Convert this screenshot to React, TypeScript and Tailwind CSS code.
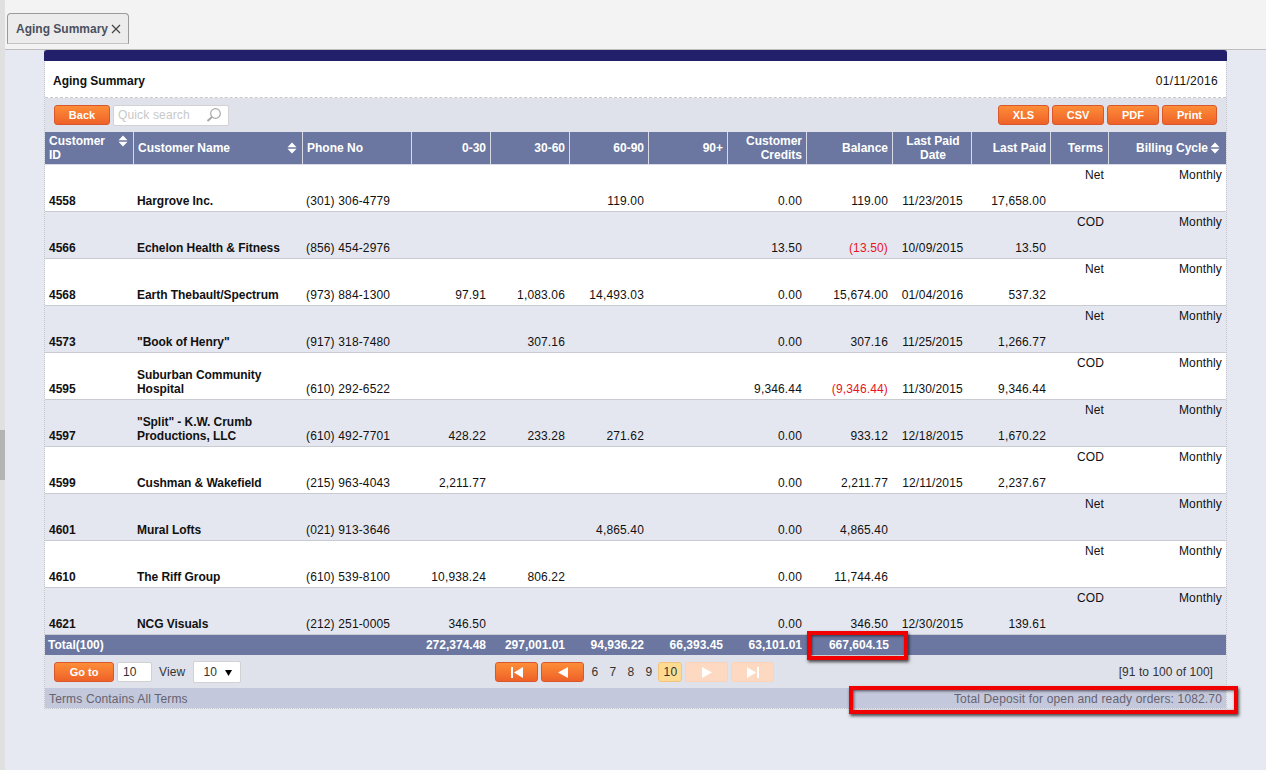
import React from "react";

type Row = {
  id: string;
  name: React.ReactNode;
  phone: string;
  a?: string;
  b?: string;
  c?: string;
  d?: string;
  credits: string;
  balance: string;
  negative?: boolean;
  date?: string;
  paid?: string;
  terms: string;
};

const rows: Row[] = [
  { id: "4558", name: "Hargrove Inc.", phone: "(301) 306-4779", c: "119.00", credits: "0.00", balance: "119.00", date: "11/23/2015", paid: "17,658.00", terms: "Net" },
  { id: "4566", name: "Echelon Health & Fitness", phone: "(856) 454-2976", credits: "13.50", balance: "(13.50)", negative: true, date: "10/09/2015", paid: "13.50", terms: "COD" },
  { id: "4568", name: "Earth Thebault/Spectrum", phone: "(973) 884-1300", a: "97.91", b: "1,083.06", c: "14,493.03", credits: "0.00", balance: "15,674.00", date: "01/04/2016", paid: "537.32", terms: "Net" },
  { id: "4573", name: "\"Book of Henry\"", phone: "(917) 318-7480", b: "307.16", credits: "0.00", balance: "307.16", date: "11/25/2015", paid: "1,266.77", terms: "Net" },
  { id: "4595", name: <>Suburban Community<br />Hospital</>, phone: "(610) 292-6522", credits: "9,346.44", balance: "(9,346.44)", negative: true, date: "11/30/2015", paid: "9,346.44", terms: "COD" },
  { id: "4597", name: <>"Split" - K.W. Crumb<br />Productions, LLC</>, phone: "(610) 492-7701", a: "428.22", b: "233.28", c: "271.62", credits: "0.00", balance: "933.12", date: "12/18/2015", paid: "1,670.22", terms: "Net" },
  { id: "4599", name: "Cushman & Wakefield", phone: "(215) 963-4043", a: "2,211.77", credits: "0.00", balance: "2,211.77", date: "12/11/2015", paid: "2,237.67", terms: "COD" },
  { id: "4601", name: "Mural Lofts", phone: "(021) 913-3646", c: "4,865.40", credits: "0.00", balance: "4,865.40", terms: "Net" },
  { id: "4610", name: "The Riff Group", phone: "(610) 539-8100", a: "10,938.24", b: "806.22", credits: "0.00", balance: "11,744.46", terms: "Net" },
  { id: "4621", name: "NCG Visuals", phone: "(212) 251-0005", a: "346.50", credits: "0.00", balance: "346.50", date: "12/30/2015", paid: "139.61", terms: "COD" },
];

const orangeBtn =
  "h-5 rounded-[3px] border border-[#d9572c] bg-gradient-to-b from-[#fd8d38] to-[#ee6128] text-[11px] font-bold tracking-normal text-white flex items-center justify-center";
const fadedBtn =
  "h-5 w-[43px] rounded-[3px] border border-[#fbd3b8] bg-[#fdd9c2] flex items-center justify-center";
const th = "border-r border-b border-r-[#d8dbe6] border-b-[#d8dbe6] px-1 leading-[14px] font-bold tracking-normal";
const td = "border-b border-[#c9cbd2] pb-[3px] align-bottom leading-[14px]";
const topTd = "border-b border-[#c9cbd2] pt-[3px] text-right align-top leading-[14px]";

function Sort() {
  return (
    <svg width="10" height="12" viewBox="0 0 10 12" className="shrink-0 fill-white">
      <path d="M5 0.5 9.5 5.2H0.5Z" />
      <path d="M5 11.5 9.5 6.8H0.5Z" />
    </svg>
  );
}

function Money({ v }: { v?: string }) {
  return <td className={td + " pr-[5px] text-right"}>{v}</td>;
}

export default function App() {
  return (
    <div className="relative flex min-h-[770px] w-[1266px] overflow-hidden bg-[#e6e9f2] font-['Liberation_Sans',Arial,sans-serif] text-xs tracking-[0.15px] text-[#111]">
      {/* scrollbar strip */}
      <div className="flex w-[5px] shrink-0 flex-col bg-[#e0e0e0]">
        <div className="mt-[430px] h-[50px] bg-[#b4b4b4]" />
      </div>

      <div className="flex min-w-0 flex-1 flex-col">
        {/* tab strip */}
        <div className="flex h-[50px] shrink-0 items-end border-b border-[#bdbdbd] bg-[#f3f3f3] pb-[5px] pl-[2px]">
          <div className="flex h-[31px] w-[122px] items-center gap-[3px] rounded-t-[4px] border border-[#9a9a9a] border-b-[#c4c4c4] bg-[#ececec] pl-2 font-bold tracking-normal text-[#4a5160]">
            Aging Summary
            <svg width="10" height="10" viewBox="0 0 10 10" className="stroke-[#444]">
              <path d="M1 1 9 9M9 1 1 9" strokeWidth="1.2" />
            </svg>
          </div>
        </div>

        {/* panel */}
        <div className="ml-[39px] w-[1183px] border-x border-b border-dotted border-[#c4c6cc]">
          <div className="-mx-px h-[11px] rounded-t-[3px] bg-[#221f6b]" />
          <div className="flex h-[37px] items-center justify-between border-b border-dashed border-[#c9c9c9] bg-white pl-2 pr-2 pt-[3px]">
            <span className="font-bold tracking-normal">Aging Summary</span>
            <span className="tracking-[0.3px]">01/11/2016</span>
          </div>

          {/* toolbar */}
          <div className="flex h-[34px] items-center bg-[#e0e2eb] pl-[9px] pr-[9px]">
            <button className={orangeBtn + " w-14"}>Back</button>
            <div className="ml-[3px] flex h-[21px] w-[116px] items-center justify-between rounded-[2px] border border-[#d2d2d2] bg-white pl-1 pr-[6px] text-[#c8c8c8]">
              Quick search
              <svg width="16" height="16" viewBox="0 0 16 16" fill="none" className="stroke-[#a8a8a8]">
                <circle cx="9.5" cy="6.5" r="4.8" strokeWidth="1.2" />
                <path d="M6 10 1.5 14" strokeWidth="2" />
              </svg>
            </div>
            <div className="ml-auto flex gap-[3px]">
              <button className={orangeBtn + " w-[51px]"}>XLS</button>
              <button className={orangeBtn + " w-[52px]"}>CSV</button>
              <button className={orangeBtn + " w-[52px]"}>PDF</button>
              <button className={orangeBtn + " w-[55px]"}>Print</button>
            </div>
          </div>

          {/* grid */}
          <table className="w-[1181px] table-fixed border-separate border-spacing-0">
            <colgroup>
              <col className="w-[89px]" />
              <col className="w-[169px]" />
              <col className="w-[109px]" />
              <col className="w-[79px]" />
              <col className="w-[79px]" />
              <col className="w-[79px]" />
              <col className="w-[79px]" />
              <col className="w-[79px]" />
              <col className="w-[86px]" />
              <col className="w-[79px]" />
              <col className="w-[79px]" />
              <col className="w-[58px]" />
              <col className="w-[117px]" />
            </colgroup>
            <thead>
              <tr className="h-[33px] bg-[#6b77a1] text-white">
                <th className={th + " text-left"}>
                  <div className="flex items-start justify-between pr-[1px]">
                    <span>Customer<br />ID</span>
                    <span className="mt-[1px]"><Sort /></span>
                  </div>
                </th>
                <th className={th + " text-left"}>
                  <div className="flex items-center justify-between pr-[1px]">
                    Customer Name <Sort />
                  </div>
                </th>
                <th className={th + " text-left"}>Phone No</th>
                <th className={th + " text-right"}>0-30</th>
                <th className={th + " text-right"}>30-60</th>
                <th className={th + " text-right"}>60-90</th>
                <th className={th + " text-right"}>90+</th>
                <th className={th + " text-right"}>Customer<br />Credits</th>
                <th className={th + " text-right"}>Balance</th>
                <th className={th + " pl-[6px] text-center"}>Last Paid<br />Date</th>
                <th className={th + " text-right"}>Last Paid</th>
                <th className={th + " pr-[5px] text-right"}>Terms</th>
                <th className="border-b border-[#d8dbe6] pl-1 pr-[6px] text-right font-bold tracking-normal">
                  <div className="flex items-center justify-end gap-[2px]">
                    Billing Cycle <Sort />
                  </div>
                </th>
              </tr>
            </thead>
            <tbody>
              {rows.map((r, i) => (
                <tr key={r.id} className={"h-[47px] " + (i % 2 ? "bg-[#e5e7f0]" : "bg-white")}>
                  <td className={td + " pl-1 font-bold tracking-normal"}>{r.id}</td>
                  <td className={td + " pl-[3px] font-bold tracking-[-0.05px]"}>{r.name}</td>
                  <td className={td + " pl-[3px]"}>{r.phone}</td>
                  <Money v={r.a} />
                  <Money v={r.b} />
                  <Money v={r.c} />
                  <Money v={r.d} />
                  <Money v={r.credits} />
                  <td className={td + " pr-[5px] text-right " + (r.negative ? "text-[#e8141c]" : "")}>{r.balance}</td>
                  <td className={td + " text-center"}>{r.date}</td>
                  <Money v={r.paid} />
                  <td className={topTd + " pr-[5px]"}>{r.terms}</td>
                  <td className={topTd + " pr-1"}>Monthly</td>
                </tr>
              ))}
              <tr className="h-[20px] bg-[#6b77a1] font-bold leading-[14px] tracking-normal text-white">
                <td colSpan={3} className="pl-[3px]">Total(100)</td>
                <td className="pr-[5px] text-right">272,374.48</td>
                <td className="pr-[5px] text-right">297,001.01</td>
                <td className="pr-[5px] text-right">94,936.22</td>
                <td className="pr-[5px] text-right">66,393.45</td>
                <td className="pr-[5px] text-right">63,101.01</td>
                <td className="pr-1 text-right">667,604.15</td>
                <td colSpan={4} />
              </tr>
            </tbody>
          </table>

          {/* pager */}
          <div className="flex h-[33px] items-center bg-[#e0e2eb] pl-[9px] pr-[13px] pt-px text-[#333]">
            <button className={orangeBtn + " w-[60px]"}>Go to</button>
            <div className="ml-[3px] flex h-5 w-[35px] items-center rounded-[2px] border border-[#d2d2d2] bg-white pl-[5px]">10</div>
            <span className="ml-[7px]">View</span>
            <div className="ml-[8px] flex h-[22px] w-[48px] items-center justify-between rounded-[2px] border border-[#d2d2d2] bg-white pl-[9px] pr-[8px]">
              10
              <svg width="7" height="7" viewBox="0 0 7 7" className="fill-black">
                <path d="M0 1H7L3.5 7Z" />
              </svg>
            </div>
            <button className={orangeBtn + " ml-[254px] w-[43px]"}>
              <svg width="12" height="11" viewBox="0 0 12 11" className="fill-white">
                <path d="M0 0H2V11H0ZM12 0V11L3 5.5Z" />
              </svg>
            </button>
            <button className={orangeBtn + " ml-[3px] w-[43px]"}>
              <svg width="10" height="11" viewBox="0 0 10 11" className="fill-white">
                <path d="M10 0V11L0 5.5Z" />
              </svg>
            </button>
            <span className="ml-[7px] w-[18px]">6</span>
            <span className="w-[18px]">7</span>
            <span className="w-[18px]">8</span>
            <span className="w-[13px]">9</span>
            <span className="flex h-5 w-6 items-center justify-center rounded-[3px] border border-[#f5c27c] bg-[#fddc92]">10</span>
            <div className={fadedBtn + " ml-[3px]"}>
              <svg width="10" height="11" viewBox="0 0 10 11" className="fill-white">
                <path d="M0 0V11L10 5.5Z" />
              </svg>
            </div>
            <div className={fadedBtn + " ml-[3px]"}>
              <svg width="12" height="11" viewBox="0 0 12 11" className="fill-white">
                <path d="M12 0H10V11H12ZM0 0V11L9 5.5Z" />
              </svg>
            </div>
            <span className="ml-auto tracking-[0.05px]">[91 to 100 of 100]</span>
          </div>

          {/* status bar */}
          <div className="flex h-5 items-center justify-between bg-[#c3c8dc] pl-[4px] pr-[4px] pt-px text-[#666370]">
            <span>Terms Contains All Terms</span>
            <span>Total Deposit for open and ready orders: 1082.70</span>
          </div>
        </div>
      </div>

      {/* annotation boxes drawn over the screenshot */}
      <div className="absolute left-[807px] top-[631px] h-[29px] w-[101px] border-4 border-[#f00000] shadow-[1px_2px_3px_rgba(0,0,0,0.7),inset_1px_1px_3px_rgba(0,0,0,0.6)]" />
      <div className="absolute left-[849px] top-[686px] h-[28px] w-[389px] border-4 border-[#f00000] shadow-[1px_2px_3px_rgba(0,0,0,0.7),inset_1px_1px_3px_rgba(0,0,0,0.6)]" />
    </div>
  );
}
